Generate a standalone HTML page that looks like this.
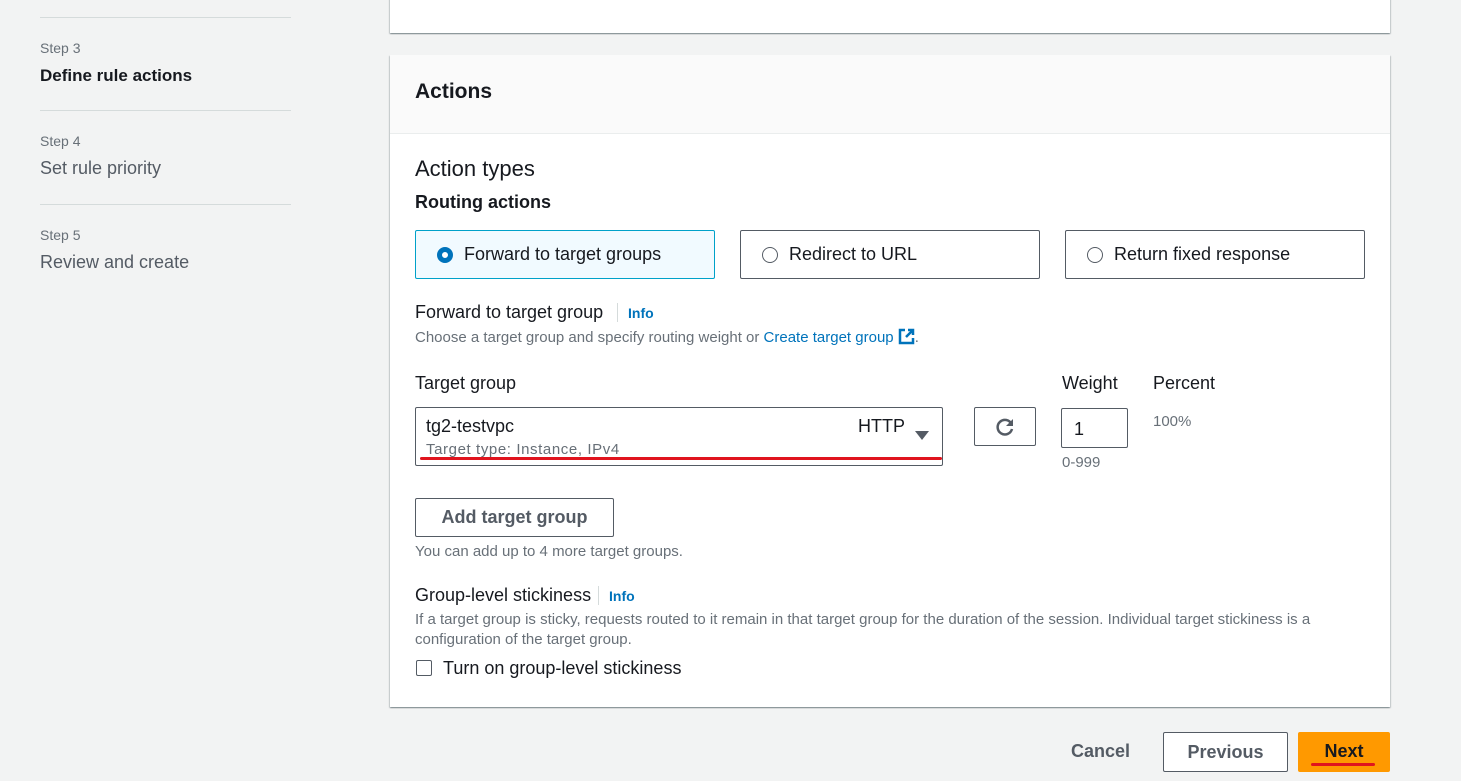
<!DOCTYPE html>
<html><head><style>
*{box-sizing:border-box;margin:0;padding:0}
body{width:1461px;height:781px;background:#f2f3f3;font-family:"Liberation Sans",sans-serif;color:#16191f;position:relative;overflow:hidden}
.a{position:absolute;white-space:nowrap}
.card{position:absolute;background:#fff;box-shadow:0 1px 1px rgba(0,28,36,.3),1px 1px 1px rgba(0,28,36,.15),-1px 1px 1px rgba(0,28,36,.15)}
.sep{position:absolute;left:40px;width:251px;height:1px;background:#d5dbdb}
.step{font-size:14px;color:#687078}
.lbl{font-size:18px;color:#545b64}
.tile{position:absolute;top:230px;height:49px;width:300px;border:1px solid #545b64;border-radius:2px;background:#fff;font-size:18px}
.radio{position:absolute;left:21px;top:16px;width:16px;height:16px;border:1.5px solid #545b64;border-radius:50%}
.small{font-size:15px;color:#687078}
.info{color:#0073bb;font-weight:bold;font-size:14px}
.btn{position:absolute;border:1px solid #545b64;border-radius:2px;background:#fff;font-weight:bold;font-size:18px;color:#545b64;text-align:center}
</style></head><body>
<div class="sep" style="top:17px"></div>
<div class="a step" style="left:40px;top:40px">Step 3</div>
<div class="a" style="left:40px;top:66px;font-size:17px;font-weight:bold">Define rule actions</div>
<div class="sep" style="top:110px"></div>
<div class="a step" style="left:40px;top:133px">Step 4</div>
<div class="a lbl" style="left:40px;top:158px">Set rule priority</div>
<div class="sep" style="top:204px"></div>
<div class="a step" style="left:40px;top:227px">Step 5</div>
<div class="a lbl" style="left:40px;top:252px">Review and create</div>

<div class="card" style="left:390px;top:-5px;width:1000px;height:38px"></div>
<div class="card" style="left:390px;top:55px;width:1000px;height:652px">
<div style="height:79px;background:#fafafa;border-bottom:1px solid #eaeded"></div>
</div>
<div class="a" style="left:415px;top:80px;font-size:21px;font-weight:bold">Actions</div>
<div class="a" style="left:415px;top:156px;font-size:22px">Action types</div>
<div class="a" style="left:415px;top:192px;font-size:18px;font-weight:bold">Routing actions</div>

<div class="tile" style="left:415px;background:#f1faff;border-color:#00a1c9"><div class="radio" style="border:5px solid #0073bb;background:#fff"></div><span class="a" style="left:48px;top:13px">Forward to target groups</span></div>
<div class="tile" style="left:740px"><div class="radio"></div><span class="a" style="left:48px;top:13px">Redirect to URL</span></div>
<div class="tile" style="left:1065px"><div class="radio"></div><span class="a" style="left:48px;top:13px">Return fixed response</span></div>

<div class="a" style="left:415px;top:302px;font-size:18px">Forward to target group</div>
<div class="a" style="left:617px;top:303px;width:1px;height:19px;background:#d5dbdb"></div>
<div class="a info" style="left:628px;top:305px">Info</div>
<div class="a small" style="left:415px;top:328px">Choose a target group and specify routing weight or <span style="color:#0073bb">Create target group</span> <svg width="17" height="17" viewBox="0 0 17 17" style="vertical-align:-3px"><path d="M7 2H2v13h13v-5M10 2h5v5M15 2L8 9" fill="none" stroke="#0073bb" stroke-width="2.5"/></svg>.</div>

<div class="a" style="left:415px;top:373px;font-size:18px">Target group</div>
<div class="a" style="left:1062px;top:373px;font-size:18px">Weight</div>
<div class="a" style="left:1153px;top:373px;font-size:18px">Percent</div>
<div class="a" style="left:415px;top:407px;width:528px;height:59px;border:1px solid #545b64;border-radius:2px;background:#fff"></div>
<div class="a" style="left:426px;top:416px;font-size:18px">tg2-testvpc</div>
<div class="a" style="left:858px;top:416px;font-size:18px">HTTP</div>
<div class="a" style="left:915px;top:431px;width:0;height:0;border-left:7px solid transparent;border-right:7px solid transparent;border-top:9px solid #545b64"></div>
<div class="a small" style="left:426px;top:441px;letter-spacing:0.6px">Target type: Instance, IPv4</div>
<div class="a" style="left:420px;top:457px;width:522px;height:3px;background:#e0141e;border-radius:2px"></div>

<div class="btn" style="left:974px;top:407px;width:62px;height:39px"><svg width="22" height="22" viewBox="0 0 22 22" style="margin-top:8px"><path d="M17.5 8A7.3 7.3 0 1 0 18 13" fill="none" stroke="#545b64" stroke-width="2.5"/><path d="M19 3v7h-7z" fill="#545b64"/></svg></div>
<div class="a" style="left:1061px;top:408px;width:67px;height:40px;border:1px solid #545b64;border-radius:2px;background:#fff;font-size:18px;padding:10px 0 0 12px">1</div>
<div class="a small" style="left:1062px;top:454px">0-999</div>
<div class="a small" style="left:1153px;top:413px">100%</div>

<div class="btn" style="left:415px;top:498px;width:199px;height:39px;line-height:37px">Add target group</div>
<div class="a small" style="left:415px;top:543px">You can add up to 4 more target groups.</div>

<div class="a" style="left:415px;top:585px;font-size:18px">Group-level stickiness</div>
<div class="a" style="left:598px;top:586px;width:1px;height:19px;background:#d5dbdb"></div>
<div class="a info" style="left:609px;top:588px">Info</div>
<div class="a small" style="left:415px;top:610px;line-height:20px;white-space:normal;width:950px">If a target group is sticky, requests routed to it remain in that target group for the duration of the session. Individual target stickiness is a configuration of the target group.</div>
<div class="a" style="left:416px;top:660px;width:16px;height:16px;border:1.5px solid #545b64;border-radius:2px"></div>
<div class="a" style="left:443px;top:658px;font-size:18px">Turn on group-level stickiness</div>

<div class="a" style="left:1071px;top:741px;font-size:18px;font-weight:bold;color:#545b64">Cancel</div>
<div class="btn" style="left:1163px;top:732px;width:125px;height:40px;line-height:38px">Previous</div>
<div class="a" style="left:1298px;top:732px;width:92px;height:40px;background:#ff9900;border-radius:2px;text-align:center;line-height:38px;font-size:18px;font-weight:bold;color:#16191f">Next</div>
<div class="a" style="left:1311px;top:763px;width:64px;height:3px;background:#e0141e;border-radius:2px"></div>
</body></html>
